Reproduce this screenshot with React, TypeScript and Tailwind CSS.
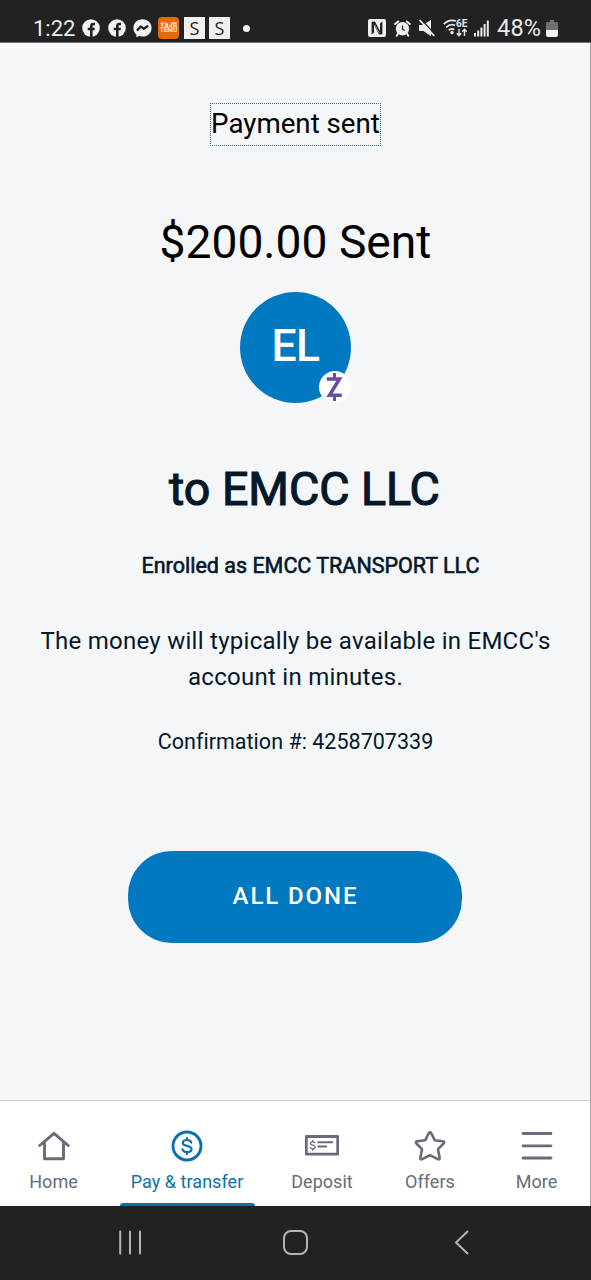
import type { ReactNode } from 'react';

type NavItemProps = {
  label: string;
  icon: ReactNode;
  width: string;
  active?: boolean;
};

function FacebookIcon() {
  return (
    <svg className="h-[18px] w-[18px]" viewBox="0 0 18 18">
      <circle cx="9" cy="9" r="8.8" fill="#f2f2f2" />
      <path d="M8 18V11.3H5.7V8.7H8V7.2C8 4.900 9.300 3.800 11.400 3.800C12.200 3.800 12.900 3.900 13 3.900V6.200H11.900C10.800 6.200 10.600 6.800 10.600 7.500V8.700H13L12.600 11.300H10.600V18Z" fill="#222" />
    </svg>
  );
}

function MessengerIcon() {
  return (
    <svg className="h-[19px] w-[19px]" viewBox="0 0 19 19">
      <path d="M9.500 .3C4.300 .3 .4 4 .4 9C.4 11.700 1.500 13.900 3.300 15.500L3.400 18.300L6.200 17.100C7.200 17.400 8.300 17.600 9.500 17.600C14.700 17.600 18.600 13.900 18.600 9C18.600 4 14.700 .3 9.500 .3Z" fill="#f2f2f2" />
      <path d="M4.600 11L7.700 7.400L10.800 9.800L14.400 7.200" fill="none" stroke="#222" strokeWidth="2.300" strokeLinejoin="round" strokeLinecap="round" />
    </svg>
  );
}

function TemuIcon() {
  return (
    <div className="flex h-[22px] w-[21px] flex-col items-center justify-center rounded-[4px] bg-[#e8690b] text-[#ffe9d6]">
      <svg className="h-[5px] w-[17px]" viewBox="0 0 17 5" fill="none" stroke="currentColor" strokeWidth="1.300">
        <path d="M1 .5L2.500 4.500M3.500 .5L2.500 2.500M5.500 .5V4.500H7.500V2H5.500M9 4H10.500M12 0L10.800 5M13.500 1H16V4H13.500Z" />
      </svg>
      <span className="text-[6.500px] leading-[7px] font-bold">TEMU</span>
    </div>
  );
}

function LetterTile() {
  return (
    <div className="flex h-[22px] w-[21px] items-center justify-center bg-[#f0f0f0] font-['Open_Sans',sans-serif] text-[18px] leading-none text-[#222]">
      S
    </div>
  );
}

function StatusBar() {
  return (
    <header className="flex h-[43px] shrink-0 items-start border-b border-[#6f7072] bg-[#222222] pt-[17px] pl-[33px] text-[#ececec]">
      <span className="w-[49px] text-[22px] leading-[23px]">1:22</span>
      <div className="flex h-[22px] items-center">
        <FacebookIcon />
        <div className="ml-[8px]"><FacebookIcon /></div>
        <div className="ml-[7px]"><MessengerIcon /></div>
        <div className="ml-[6px]"><TemuIcon /></div>
        <div className="ml-[5px]"><LetterTile /></div>
        <div className="ml-[4px]"><LetterTile /></div>
        <div className="ml-[13px] h-[7px] w-[7px] rounded-full bg-[#f2f2f2]" />
      </div>
      <div className="ml-auto flex h-[22px] items-center pr-[33px]">
        {/* NFC */}
        <svg className="h-[18px] w-[18px]" viewBox="0 0 18 18">
          <rect width="18" height="18" rx="2" fill="#f0f0f0" />
          <path d="M3.600 15.500V2.800L7 2.600L12 12V4.500L14.400 2.500V15.200L11 15.400L6 6V13.500Z" fill="#222" />
          <path d="M7 6.200L11.200 14" stroke="#f0f0f0" strokeWidth=".6" />
        </svg>
        {/* Alarm */}
        <svg className="ml-[8px] h-[17px] w-[17px]" viewBox="0 0 17 17" fill="none" stroke="#f0f0f0">
          <circle cx="8.500" cy="8.800" r="6.700" fill="#f0f0f0" stroke="none" />
          <path d="M1.200 4L4.200 1.500M12.800 1.500L15.800 4" strokeWidth="2" strokeLinecap="round" />
          <path d="M4 13.500L2.700 15.800M13 13.500L14.300 15.800" strokeWidth="1.800" strokeLinecap="round" />
          <path d="M8.500 5.500V9.200L10.800 10.500" stroke="#222" strokeWidth="1.200" />
        </svg>
        {/* Muted */}
        <svg className="ml-[7px] h-[18px] w-[18px]" viewBox="0 0 18 18">
          <path d="M1 6H5.500L13 .8V17.200L5.500 12H1Z" fill="#f0f0f0" />
          <path d="M3.200 .4L18 16.200" stroke="#222" strokeWidth="1.300" />
          <path d="M1.500 1L16.300 17" stroke="#f0f0f0" strokeWidth="1.800" />
        </svg>
        {/* Wi-Fi 6E */}
        <svg className="ml-[7px] h-[20px] w-[25px]" viewBox="0 0 25 20" fill="none" stroke="#e8e8e8">
          <path d="M.8 6.200C4.200 2.600 9 1.600 13 3M3.200 9.300C6 6.600 9.300 6.200 12 7.200M5.700 12.200C7.500 10.700 9.700 10.600 11.300 11.600" strokeWidth="1.700" />
          <circle cx="9" cy="14.500" r="1.700" fill="#e8e8e8" stroke="none" />
          <path d="M16 11V17.500M13.800 15.300L16 17.700L18.200 15.300M21.500 18V11.500M19.300 13.700L21.500 11.300L23.700 13.700" strokeWidth="1.400" />
          <text x="13" y="9" fontSize="10" fontWeight="700" fill="#e8e8e8" stroke="none">6E</text>
        </svg>
        {/* Signal */}
        <svg className="ml-[6px] h-[17px] w-[16px]" viewBox="0 0 16 17" fill="#e8e8e8">
          <rect x="0" y="13" width="2" height="3.500" />
          <rect x="3.200" y="10.500" width="2" height="6" />
          <rect x="6.400" y="7.500" width="2" height="9" />
          <rect x="9.600" y="4" width="2" height="12.500" />
          <rect x="12.800" y=".5" width="2" height="16" />
        </svg>
        <span className="ml-[7px] w-[49px] text-[23.500px] leading-[23px] tracking-[0.200px]">48%</span>
        {/* Battery */}
        <svg className="h-[17px] w-[12px]" viewBox="0 0 12 17">
          <path d="M4 0H8V2H10.500Q12 2 12 3.500V10H0V3.500Q0 2 1.500 2H4Z" fill="#707070" />
          <path d="M0 10H12V15Q12 17 10 17H2Q0 17 0 15Z" fill="#f2f2f2" />
        </svg>
      </div>
    </header>
  );
}

function Avatar() {
  return (
    <div className="relative mt-[22px] flex h-[111px] w-[111px] items-center justify-center rounded-full bg-[#0079c1]">
      <span className="pb-[2px] text-[44.500px] leading-none font-medium tracking-[-0.500px] text-white">EL</span>
      <div className="absolute right-0 bottom-0 flex h-8 w-8 items-center justify-center rounded-full bg-white">
        <svg className="h-[28px] w-[18px]" viewBox="0 0 18 28" fill="none" stroke="#6a4ba3">
          <path d="M.800 6H13.500L3.500 22.300H15.800" strokeWidth="3.500" strokeLinejoin="miter" />
          <path d="M8.500 0V6M8.500 22V28" strokeWidth="3" />
        </svg>
      </div>
    </div>
  );
}

function HomeIcon() {
  return (
    <svg className="h-8 w-8" viewBox="0 0 32 32" fill="none" stroke="#666c7a" strokeWidth="2.900" strokeLinecap="round" strokeLinejoin="round">
      <path d="M1.800 15.500L16 3.300L30.200 15.500" />
      <path d="M6.500 13.500V28.700H25.500V13.500" />
    </svg>
  );
}

function PayIcon() {
  return (
    <svg className="h-8 w-8" viewBox="0 0 32 32" fill="none" stroke="#0d71a9" strokeLinecap="round">
      <circle cx="16" cy="16" r="14" strokeWidth="2.900" />
      <path d="M20.300 12.500C19.800 10.800 18.400 10 16 10C13.500 10 11.800 11.100 11.800 12.900C11.800 17 20.500 14.600 20.500 19C20.500 21 18.700 22.200 16 22.200C13.500 22.200 11.900 21.100 11.400 19.300M16 8V10M16 22.200V24.200" strokeWidth="2.200" />
    </svg>
  );
}

function DepositIcon() {
  return (
    <svg className="h-8 w-[34px]" viewBox="0 0 34 32" fill="none" stroke="#666c7a">
      <rect x="1.300" y="6.500" width="31.400" height="17.600" strokeWidth="2.800" strokeLinejoin="round" />
      <path d="M12.500 12.300H28M12.500 16.500H22" strokeWidth="2" />
      <path d="M10 13.200C9.600 12.200 8.800 11.800 7.700 11.800C6.300 11.800 5.400 12.500 5.400 13.500C5.400 15.900 10.200 14.500 10.200 17.100C10.200 18.200 9.200 18.900 7.800 18.900C6.400 18.900 5.400 18.300 5.100 17.200M7.700 10V11.700M7.700 18.900V20.700" strokeWidth="1.300" />
    </svg>
  );
}

function StarIcon() {
  return (
    <svg className="h-8 w-8" viewBox="0 0 32 32" fill="none" stroke="#666c7a" strokeWidth="2.600" strokeLinejoin="round">
      <path d="M14.800 3.200Q16 1.400 17.200 3.200L20.800 10.300L28.800 11.300Q31.100 11.800 29.600 13.500L24 19.200L25.600 27.600Q25.900 30 23.700 29.100L16 25.200L8.300 29.100Q6.100 30 6.400 27.600L8 19.200L2.400 13.500Q.9 11.800 3.200 11.300L11.200 10.300Z" />
    </svg>
  );
}

function MenuIcon() {
  return (
    <svg className="h-8 w-8" viewBox="0 0 32 32" fill="none" stroke="#666c7a" strokeWidth="2.800" strokeLinecap="round">
      <path d="M2 3.500H30M2 15.800H30M2 28H30" />
    </svg>
  );
}

function NavItem({ label, icon, width, active }: NavItemProps) {
  return (
    <a
      className={`flex h-full shrink-0 flex-col items-center pt-[29px] ${width} ${
        active ? 'text-[#0d71a9]' : 'text-[#666c7a]'
      }`}
    >
      {icon}
      <span className="mt-[8px] text-[18px] leading-[24px] tracking-[0.050px] whitespace-nowrap">{label}</span>
      {active && <div className="mt-auto h-[3px] w-[135px] rounded-t-sm bg-[#0d71a9]" />}
    </a>
  );
}

function BottomNav() {
  return (
    <nav className="flex h-[106px] shrink-0 border-t border-[#cfd1d4] bg-white">
      <NavItem label="Home" icon={<HomeIcon />} width="w-[107px]" />
      <NavItem label="Pay & transfer" icon={<PayIcon />} width="w-[160px]" active />
      <NavItem label="Deposit" icon={<DepositIcon />} width="w-[110px]" />
      <NavItem label="Offers" icon={<StarIcon />} width="w-[106px]" />
      <NavItem label="More" icon={<MenuIcon />} width="w-[107px]" />
    </nav>
  );
}

function SystemBar() {
  return (
    <footer className="flex h-[74px] shrink-0 items-start justify-between bg-[#222222] pt-6 pr-[122px] pl-[118px]">
      <svg className="h-[25px] w-[24px]" viewBox="0 0 24 25" stroke="#b4b4b4" strokeWidth="2" strokeLinecap="round">
        <path d="M2.200 1.500V23.500M12 1.500V23.500M22 1.500V23.500" />
      </svg>
      <div className="mr-[5px] h-[25px] w-[25px] rounded-[8px] border-2 border-[#b4b4b4]" />
      <svg className="h-[25px] w-[15px]" viewBox="0 0 15 25" fill="none" stroke="#b4b4b4" strokeWidth="2">
        <path d="M14 1L2 12.500L14 24" />
      </svg>
    </footer>
  );
}

export default function App() {
  return (
    <div className="flex h-[1280px] w-[591px] flex-col overflow-hidden bg-[#f4f6f8] font-[Roboto,sans-serif]">
      <StatusBar />
      <div className="flex min-h-0 flex-1 flex-col border-r border-[#a3a5a8]">
        <main className="flex flex-1 flex-col items-center pt-[60px] pl-px text-center text-[#04182a]">
          <div className="border border-dotted border-[#33618c] pb-[2px] text-[27.700px] leading-[39px] whitespace-nowrap text-black">
            Payment sent
          </div>
          <p className="mt-[68px] text-[46.200px] leading-[56px] text-black">$200.00 Sent</p>
          <Avatar />
          <h1 className="mt-[58px] ml-[18px] text-[46.500px] leading-[56px] [-webkit-text-stroke:1.200px_#04182a]">
            to EMCC LLC
          </h1>
          <h2 className="mt-[35px] ml-[30px] text-[21.500px] leading-[28px] [-webkit-text-stroke:0.600px_#04182a]">
            Enrolled as EMCC TRANSPORT LLC
          </h2>
          <p className="mt-[43px] text-[24px] leading-[36px] tracking-[0.270px]">
            The money will typically be available in EMCC's
            <br />
            account in minutes.
          </p>
          <p className="mt-[33px] text-[21.500px] leading-[28px] tracking-[0.020px]">Confirmation #: 4258707339</p>
          <button className="mt-[95px] mr-px h-[92px] w-[334px] rounded-[44px] bg-[#0079c1] pb-[2px] pl-px text-[24px] font-medium tracking-[1.900px] text-white">
            ALL DONE
          </button>
        </main>
        <BottomNav />
      </div>
      <SystemBar />
    </div>
  );
}
